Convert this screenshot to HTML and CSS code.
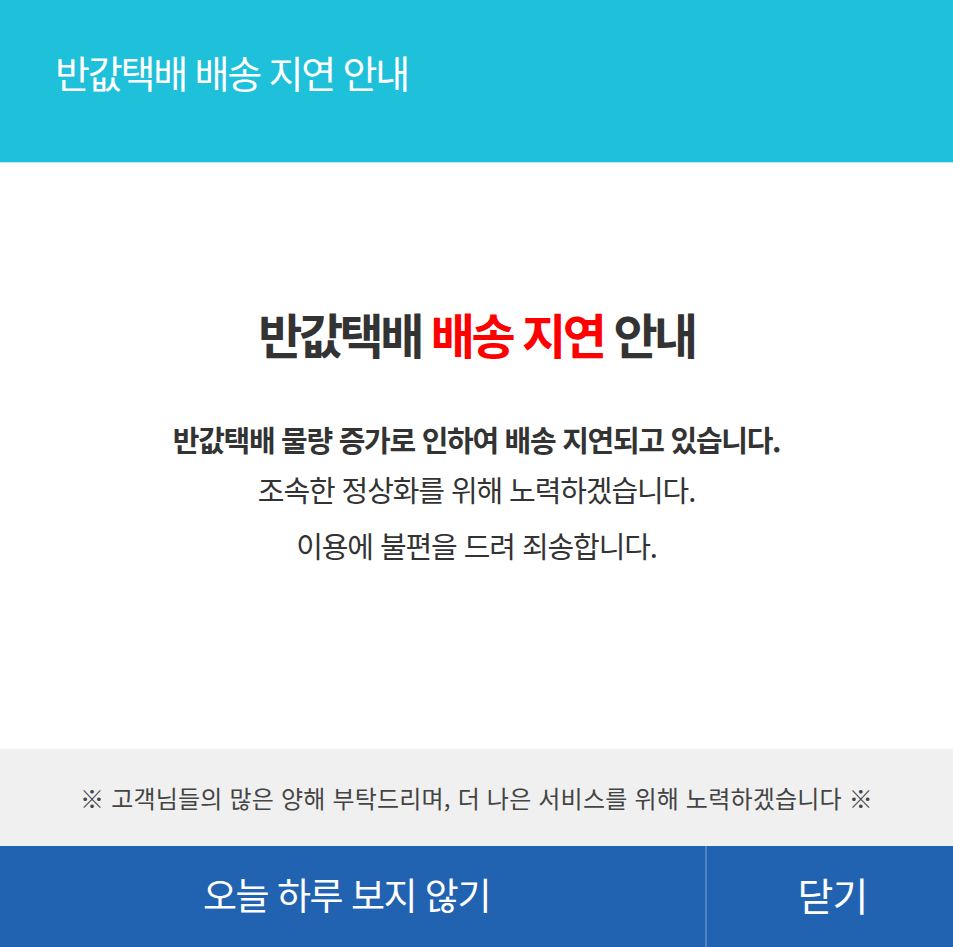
FILE: index.html
```html
<!DOCTYPE html>
<html lang="ko">
<head>
<meta charset="utf-8">
<title>반값택배 배송 지연 안내</title>
<link rel="stylesheet" href="styles.css">
</head>
<body>
<div class="popup">
  <header class="head">
    <h1 class="head-title">반값택배 배송 지연 안내</h1>
  </header>
  <main class="content">
    <h2 class="main-title">반값택배 <span class="red">배송 지연</span> 안내</h2>
    <p class="line line-bold">반값택배 물량 증가로 인하여 배송 지연되고 있습니다.</p>
    <p class="line">조속한 정상화를 위해 노력하겠습니다.</p>
    <p class="line line-last">이용에 불편을 드려 죄송합니다.</p>
  </main>
  <div class="notice">※ 고객님들의 많은 양해 부탁드리며, 더 나은 서비스를 위해 노력하겠습니다 ※</div>
  <footer class="foot">
    <button class="btn btn-today">오늘 하루 보지 않기</button>
    <button class="btn btn-close">닫기</button>
  </footer>
</div>
</body>
</html>
```
FILE: styles.css
```css
html, body {
  margin: 0;
  padding: 0;
  background: #ffffff;
}
body {
  font-family: "Noto Sans CJK KR", "Noto Sans", sans-serif;
  width: 953px;
  height: 947px;
  overflow: hidden;
}
.popup {
  display: flex;
  flex-direction: column;
  height: 947px;
}
.head {
  height: 162px;
  background: #1fc0da;
  border-bottom: 1px solid #b8eaf2;
  display: flex;
  align-items: center;
  padding-left: 55px;
}
.head-title {
  margin: 0;
  color: #ffffff;
  font-size: 38px;
  font-weight: 400;
  letter-spacing: -2.2px;
  line-height: 1;
  padding-bottom: 18px;
}
.content {
  flex: 1;
  display: flex;
  flex-direction: column;
  align-items: center;
  padding-top: 142px;
}
.main-title {
  margin: 0 0 51px;
  font-size: 48px;
  font-weight: 700;
  color: #333333;
  letter-spacing: -3.5px;
  line-height: 1.2;
}
.red {
  color: #ff0000;
}
.line {
  margin: 0;
  font-size: 29px;
  color: #333333;
  letter-spacing: -1.1px;
  line-height: 50px;
}
.line-bold {
  font-weight: 700;
  letter-spacing: -1.3px;
}
.line-last {
  margin-top: 6px;
}
.notice {
  height: 97px;
  background: #f0f0f0;
  display: flex;
  align-items: center;
  justify-content: center;
  font-size: 24px;
  color: #444444;
  letter-spacing: 0.2px;
}
.foot {
  height: 101px;
  background: #2163b0;
  display: flex;
}
.btn {
  border: 0;
  margin: 0;
  padding: 0 0 6px;
  background: transparent;
  color: #ffffff;
  font-family: inherit;
  font-size: 37px;
  letter-spacing: -1.5px;
  cursor: pointer;
}
.btn-today {
  width: 707px;
  padding-right: 12px;
  border-right: 2px solid #4d84c4;
}
.btn-close {
  flex: 1;
  padding-left: 5px;
  font-size: 39px;
  letter-spacing: -1px;
}
```
